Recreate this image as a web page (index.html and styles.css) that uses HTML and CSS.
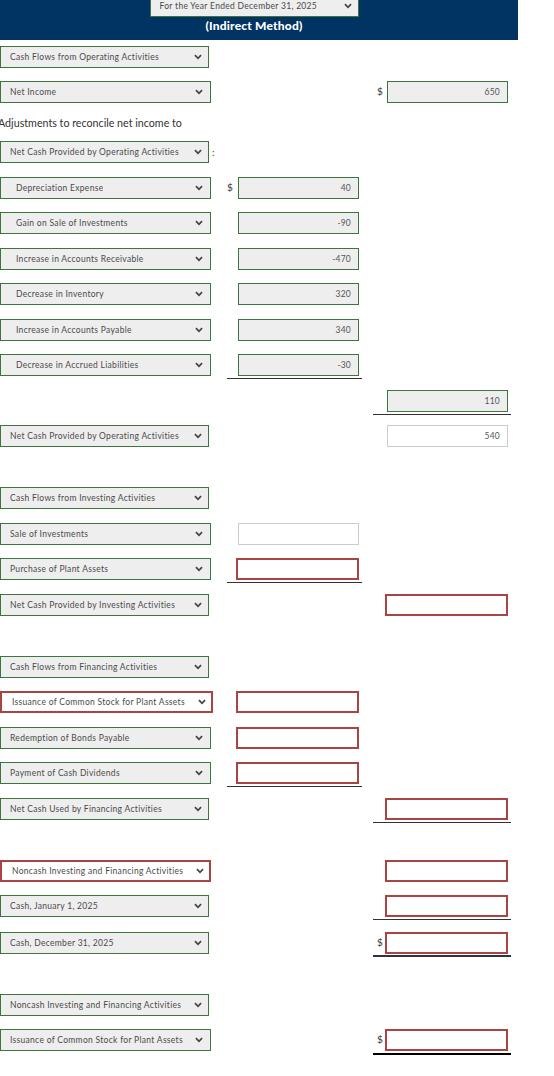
FILE: index.html
```html
<!DOCTYPE html>
<html lang="en">
<head>
<meta charset="utf-8">
<title>Statement of Cash Flows</title>
<link rel="stylesheet" href="styles.css">
</head>
<body>
<header class="hdr">
  <div class="sel hdr-sel"><span class="sel-txt">For the Year Ended December 31, 2025</span><svg class="chev" viewBox="0 0 10 7"><path d="M1.2 1.3 5 5.1 8.8 1.3"/></svg></div>
  <div class="hdr-title">(Indirect Method)</div>
</header>
<main class="sheet">
  <div class="row">
    <div class="c-lbl"><div class="sel"><span class="sel-txt">Cash Flows from Operating Activities</span><svg class="chev" viewBox="0 0 10 7"><path d="M1.2 1.3 5 5.1 8.8 1.3"/></svg></div></div>
  </div>
  <div class="row">
    <div class="c-lbl"><div class="sel wide"><span class="sel-txt">Net Income</span><svg class="chev" viewBox="0 0 10 7"><path d="M1.2 1.3 5 5.1 8.8 1.3"/></svg></div></div>
    <div class="c-a2"><span class="cur">$</span><div class="inp">650</div></div>
  </div>
  <div class="adj">Adjustments to reconcile net income to</div>
  <div class="row">
    <div class="c-lbl"><div class="sel"><span class="sel-txt">Net Cash Provided by Operating Activities</span><svg class="chev" viewBox="0 0 10 7"><path d="M1.2 1.3 5 5.1 8.8 1.3"/></svg></div><span class="colon">:</span></div>
  </div>
  <div class="row">
    <div class="c-lbl"><div class="sel wide ind"><span class="sel-txt">Depreciation Expense</span><svg class="chev" viewBox="0 0 10 7"><path d="M1.2 1.3 5 5.1 8.8 1.3"/></svg></div></div>
    <div class="c-a1"><span class="cur">$</span><div class="inp">40</div></div>
  </div>
  <div class="row">
    <div class="c-lbl"><div class="sel wide ind"><span class="sel-txt">Gain on Sale of Investments</span><svg class="chev" viewBox="0 0 10 7"><path d="M1.2 1.3 5 5.1 8.8 1.3"/></svg></div></div>
    <div class="c-a1"><span class="cur"></span><div class="inp">-90</div></div>
  </div>
  <div class="row">
    <div class="c-lbl"><div class="sel wide ind"><span class="sel-txt">Increase in Accounts Receivable</span><svg class="chev" viewBox="0 0 10 7"><path d="M1.2 1.3 5 5.1 8.8 1.3"/></svg></div></div>
    <div class="c-a1"><span class="cur"></span><div class="inp">-470</div></div>
  </div>
  <div class="row">
    <div class="c-lbl"><div class="sel wide ind"><span class="sel-txt">Decrease in Inventory</span><svg class="chev" viewBox="0 0 10 7"><path d="M1.2 1.3 5 5.1 8.8 1.3"/></svg></div></div>
    <div class="c-a1"><span class="cur"></span><div class="inp">320</div></div>
  </div>
  <div class="row">
    <div class="c-lbl"><div class="sel wide ind"><span class="sel-txt">Increase in Accounts Payable</span><svg class="chev" viewBox="0 0 10 7"><path d="M1.2 1.3 5 5.1 8.8 1.3"/></svg></div></div>
    <div class="c-a1"><span class="cur"></span><div class="inp">340</div></div>
  </div>
  <div class="row">
    <div class="c-lbl"><div class="sel wide ind"><span class="sel-txt">Decrease in Accrued Liabilities</span><svg class="chev" viewBox="0 0 10 7"><path d="M1.2 1.3 5 5.1 8.8 1.3"/></svg></div></div>
    <div class="c-a1 ul"><span class="cur"></span><div class="inp">-30</div></div>
  </div>
  <div class="row">
    <div class="c-a2 ul"><span class="cur"></span><div class="inp">110</div></div>
  </div>
  <div class="row">
    <div class="c-lbl"><div class="sel"><span class="sel-txt">Net Cash Provided by Operating Activities</span><svg class="chev" viewBox="0 0 10 7"><path d="M1.2 1.3 5 5.1 8.8 1.3"/></svg></div></div>
    <div class="c-a2"><span class="cur"></span><div class="inp blank">540</div></div>
  </div>

  <div class="row sect">
    <div class="c-lbl"><div class="sel"><span class="sel-txt">Cash Flows from Investing Activities</span><svg class="chev" viewBox="0 0 10 7"><path d="M1.2 1.3 5 5.1 8.8 1.3"/></svg></div></div>
  </div>
  <div class="row">
    <div class="c-lbl"><div class="sel wide"><span class="sel-txt">Sale of Investments</span><svg class="chev" viewBox="0 0 10 7"><path d="M1.2 1.3 5 5.1 8.8 1.3"/></svg></div></div>
    <div class="c-a1"><span class="cur"></span><div class="inp blank"></div></div>
  </div>
  <div class="row">
    <div class="c-lbl"><div class="sel wide"><span class="sel-txt">Purchase of Plant Assets</span><svg class="chev" viewBox="0 0 10 7"><path d="M1.2 1.3 5 5.1 8.8 1.3"/></svg></div></div>
    <div class="c-a1 ul"><span class="cur"></span><div class="inp err"></div></div>
  </div>
  <div class="row">
    <div class="c-lbl"><div class="sel"><span class="sel-txt">Net Cash Provided by Investing Activities</span><svg class="chev" viewBox="0 0 10 7"><path d="M1.2 1.3 5 5.1 8.8 1.3"/></svg></div></div>
    <div class="c-a2"><span class="cur"></span><div class="inp err"></div></div>
  </div>

  <div class="row sect">
    <div class="c-lbl"><div class="sel"><span class="sel-txt">Cash Flows from Financing Activities</span><svg class="chev" viewBox="0 0 10 7"><path d="M1.2 1.3 5 5.1 8.8 1.3"/></svg></div></div>
  </div>
  <div class="row">
    <div class="c-lbl"><div class="sel widest bad"><span class="sel-txt">Issuance of Common Stock for Plant Assets</span><svg class="chev" viewBox="0 0 10 7"><path d="M1.2 1.3 5 5.1 8.8 1.3"/></svg></div></div>
    <div class="c-a1"><span class="cur"></span><div class="inp err"></div></div>
  </div>
  <div class="row">
    <div class="c-lbl"><div class="sel wide"><span class="sel-txt">Redemption of Bonds Payable</span><svg class="chev" viewBox="0 0 10 7"><path d="M1.2 1.3 5 5.1 8.8 1.3"/></svg></div></div>
    <div class="c-a1"><span class="cur"></span><div class="inp err"></div></div>
  </div>
  <div class="row">
    <div class="c-lbl"><div class="sel wide"><span class="sel-txt">Payment of Cash Dividends</span><svg class="chev" viewBox="0 0 10 7"><path d="M1.2 1.3 5 5.1 8.8 1.3"/></svg></div></div>
    <div class="c-a1 ul"><span class="cur"></span><div class="inp err"></div></div>
  </div>
  <div class="row">
    <div class="c-lbl"><div class="sel"><span class="sel-txt">Net Cash Used by Financing Activities</span><svg class="chev" viewBox="0 0 10 7"><path d="M1.2 1.3 5 5.1 8.8 1.3"/></svg></div></div>
    <div class="c-a2 ul"><span class="cur"></span><div class="inp err"></div></div>
  </div>

  <div class="row sect">
    <div class="c-lbl"><div class="sel wide bad"><span class="sel-txt">Noncash Investing and Financing Activities</span><svg class="chev" viewBox="0 0 10 7"><path d="M1.2 1.3 5 5.1 8.8 1.3"/></svg></div></div>
    <div class="c-a2"><span class="cur"></span><div class="inp err"></div></div>
  </div>
  <div class="row tall">
    <div class="c-lbl"><div class="sel"><span class="sel-txt">Cash, January 1, 2025</span><svg class="chev" viewBox="0 0 10 7"><path d="M1.2 1.3 5 5.1 8.8 1.3"/></svg></div></div>
    <div class="c-a2 ul"><span class="cur"></span><div class="inp err"></div></div>
  </div>
  <div class="row">
    <div class="c-lbl"><div class="sel"><span class="sel-txt">Cash, December 31, 2025</span><svg class="chev" viewBox="0 0 10 7"><path d="M1.2 1.3 5 5.1 8.8 1.3"/></svg></div></div>
    <div class="c-a2 ul-thick"><span class="cur">$</span><div class="inp err"></div></div>
  </div>

  <div class="row sect">
    <div class="c-lbl"><div class="sel"><span class="sel-txt">Noncash Investing and Financing Activities</span><svg class="chev" viewBox="0 0 10 7"><path d="M1.2 1.3 5 5.1 8.8 1.3"/></svg></div></div>
  </div>
  <div class="row">
    <div class="c-lbl"><div class="sel wide"><span class="sel-txt">Issuance of Common Stock for Plant Assets</span><svg class="chev" viewBox="0 0 10 7"><path d="M1.2 1.3 5 5.1 8.8 1.3"/></svg></div></div>
    <div class="c-a2 ul-black"><span class="cur">$</span><div class="inp err"></div></div>
  </div>
</main>
</body>
</html>
```

FILE: styles.css
```css
html, body {
  margin: 0;
  padding: 0;
  background: #fff;
}
body {
  font-family: "Lato", "Open Sans", "DejaVu Sans", sans-serif;
  color: #333;
  overflow: hidden;
}

/* header */
.hdr {
  width: 518px;
  height: 40px;
  background: #013462;
  display: flex;
  flex-direction: column;
  align-items: center;
  padding-right: 10px;
  box-sizing: border-box;
}
.hdr-sel {
  width: 210px;
  margin-top: -5px;
  flex: none;
}
.hdr-title {
  color: #fff;
  font-weight: 900;
  font-size: 12px;
  line-height: 18px;
  letter-spacing: 0.2px;
}

/* content */
.sheet {
  display: flex;
  flex-direction: column;
  padding-top: 5.5px;
}
.row {
  display: grid;
  grid-template-columns: 227px 135px 11px 138px;
  grid-template-rows: 22px;
  height: 22px;
  margin-bottom: 13.5px;
}
.row.sect { margin-top: 26.5px; }
.row.tall { margin-bottom: 14.5px; }

.c-lbl {
  grid-column: 1;
  display: flex;
  align-items: center;
}
.c-a1, .c-a2 {
  display: flex;
  align-items: flex-start;
  align-self: start;
}
.c-a1 { grid-column: 2; }
.c-a2 { grid-column: 4; }
.c-a1 .cur { width: 11px; padding-left: 0; }
.c-a2 .cur { width: 10px; padding-left: 4px; }

.ul { border-bottom: 1px solid #333; padding-bottom: 2px; }
.ul-thick { border-bottom: 2px solid #2b3440; padding-bottom: 1px; }
.ul-black { border-bottom: 2px solid #000; padding-bottom: 2px; }

/* select look-alike */
.sel {
  box-sizing: border-box;
  width: 209px;
  height: 22px;
  border: 1px solid #3c763d;
  background: #eee;
  display: flex;
  align-items: center;
  justify-content: space-between;
  padding: 0 6px 0 9px;
  font-size: 8.5px;
  letter-spacing: 0.3px;
  color: #4a4a4a;
  white-space: nowrap;
}
.sel.wide { width: 211px; padding-right: 7px; }
.sel.widest { width: 213px; }
.sel.ind { padding-left: 15px; }
.sel.bad {
  background: #fff;
  border: 2px solid #a94442;
  padding-left: 10px;
  padding-right: 5px;
}
.sel-txt { overflow: hidden; }
.chev {
  width: 8px;
  height: 6px;
  flex: none;
  fill: none;
  stroke: #444;
  stroke-width: 2.2;
}

.colon {
  font-size: 10px;
  margin-left: 3px;
  color: #333;
}

.cur {
  height: 22px;
  line-height: 20px;
  font-size: 10px;
  color: #333;
  flex: none;
  box-sizing: content-box;
}

.inp {
  box-sizing: border-box;
  width: 121px;
  height: 22px;
  border: 1px solid #3c763d;
  background: #eee;
  text-align: right;
  padding-right: 7px;
  font-size: 8.5px;
  letter-spacing: 0.2px;
  line-height: 20px;
  color: #555;
  flex: none;
}
.inp.blank {
  background: #fff;
  border-color: #ccc;
}
.inp.err {
  background: #fff;
  border: 2px solid #a94442;
  width: 123px;
  margin-left: -2px;
}

.adj {
  height: 11px;
  line-height: 11px;
  font-size: 10.7px;
  color: #333;
  margin: 0 0 13.5px -2px;
  white-space: nowrap;
}
```
